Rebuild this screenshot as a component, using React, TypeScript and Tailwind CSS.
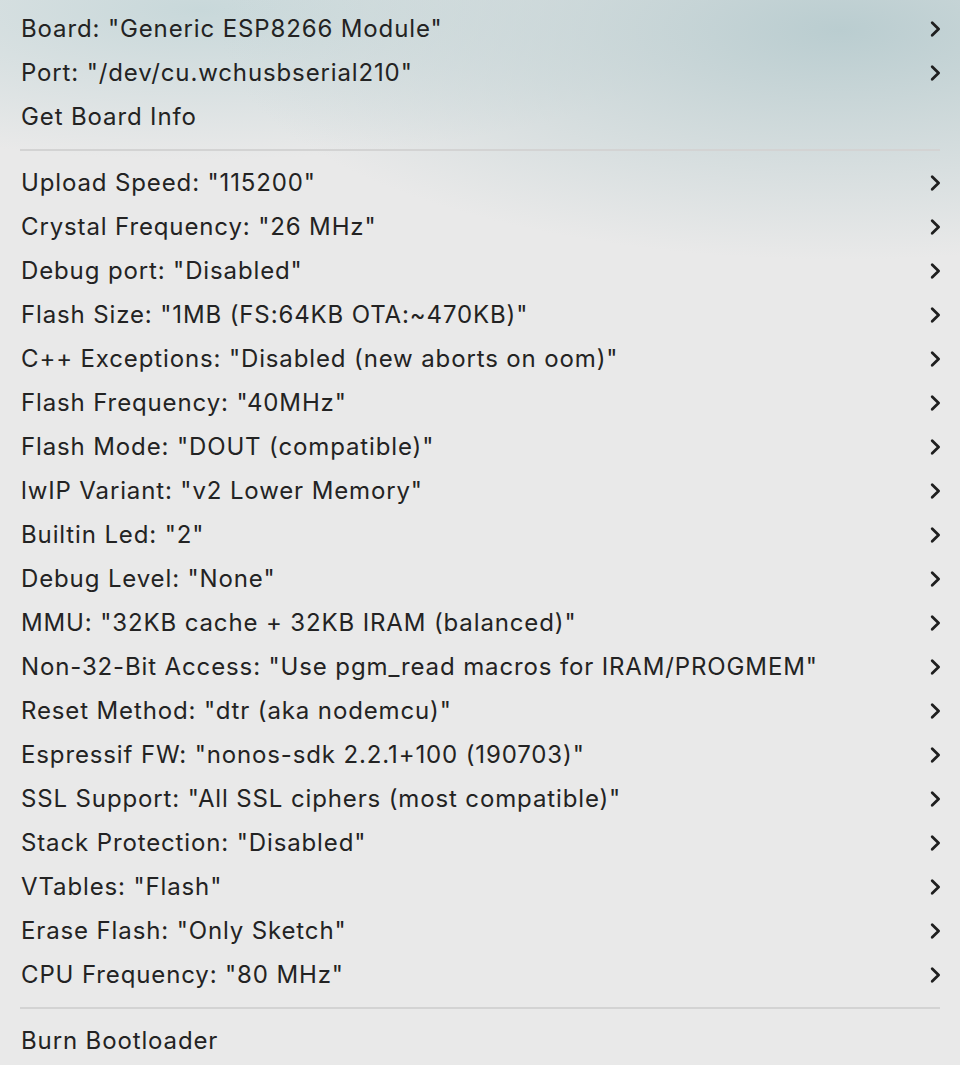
const topItems = [
  { label: 'Board: "Generic ESP8266 Module"', sub: true },
  { label: 'Port: "/dev/cu.wchusbserial210"', sub: true },
  { label: "Get Board Info", sub: false },
];

const optionItems = [
  'Upload Speed: "115200"',
  'Crystal Frequency: "26 MHz"',
  'Debug port: "Disabled"',
  'Flash Size: "1MB (FS:64KB OTA:~470KB)"',
  'C++ Exceptions: "Disabled (new aborts on oom)"',
  'Flash Frequency: "40MHz"',
  'Flash Mode: "DOUT (compatible)"',
  'lwIP Variant: "v2 Lower Memory"',
  'Builtin Led: "2"',
  'Debug Level: "None"',
  'MMU: "32KB cache + 32KB IRAM (balanced)"',
  'Non-32-Bit Access: "Use pgm_read macros for IRAM/PROGMEM"',
  'Reset Method: "dtr (aka nodemcu)"',
  'Espressif FW: "nonos-sdk 2.2.1+100 (190703)"',
  'SSL Support: "All SSL ciphers (most compatible)"',
  'Stack Protection: "Disabled"',
  'VTables: "Flash"',
  'Erase Flash: "Only Sketch"',
  'CPU Frequency: "80 MHz"',
];

function Chevron() {
  return (
    <svg width="12" height="18" viewBox="0 0 12 18" className="text-[#1f1f1f]">
      <path
        d="M3.2 2.8 L9.6 9 L3.2 15.2"
        fill="none"
        stroke="currentColor"
        strokeWidth="2.8"
        strokeLinecap="round"
        strokeLinejoin="round"
      />
    </svg>
  );
}

function MenuItem({ label, sub }: { label: string; sub?: boolean }) {
  return (
    <div className="flex items-center justify-between h-[44px] pl-[21px] pr-[19px]">
      <span className="text-[24px] leading-none text-[#232323] tracking-[0.87px]">{label}</span>
      {sub && <Chevron />}
    </div>
  );
}

function Separator() {
  return (
    <div className="h-[22px] flex items-center px-[20px]">
      <div className="h-[2px] w-full bg-[#d3d3d3]" />
    </div>
  );
}

export default function App() {
  return (
    <div
      className="w-[960px] h-[1065px] overflow-hidden bg-[#e9e9e9] bg-[radial-gradient(ellipse_620px_230px_at_840px_30px,#bacdd0_0%,rgba(196,211,213,0.75)_40%,rgba(233,233,233,0)_100%),radial-gradient(ellipse_520px_150px_at_200px_10px,#c8d8da_0%,rgba(233,233,233,0)_100%)] pt-[7px]"
      style={{ fontFamily: 'Inter, "Noto Sans", sans-serif' }}
    >
      {topItems.map((it) => (
        <MenuItem key={it.label} label={it.label} sub={it.sub} />
      ))}
      <Separator />
      {optionItems.map((label) => (
        <MenuItem key={label} label={label} sub />
      ))}
      <Separator />
      <MenuItem label="Burn Bootloader" />
    </div>
  );
}
